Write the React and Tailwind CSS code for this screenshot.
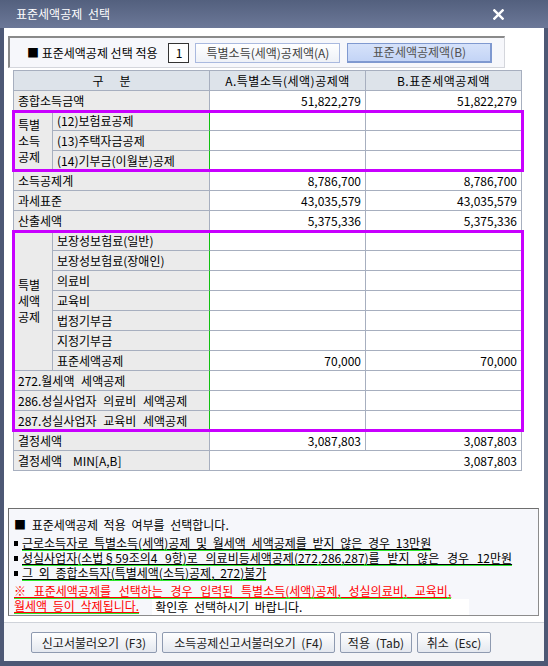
import React from "react";

const GRID = "border-[#a7afbf]";
const LBL = `bg-[#ebebeb] border-r border-b ${GRID} pl-[4px] flex items-center whitespace-nowrap`;
const VAL = `bg-white border-r border-b ${GRID} pr-[4px] flex items-center justify-end`;
const LBL_G = `bg-[#ebebeb] border-r border-r-[#10c010] border-b border-b-[#a7afbf] pl-[4px] flex items-center whitespace-nowrap`;

function SimpleRow({ label, a, b }) {
  return (
    <div className="grid grid-cols-[196px_156px_156px] h-[20px]">
      <div className={LBL}>{label}</div>
      <div className={VAL}>{a}</div>
      <div className={VAL}>{b}</div>
    </div>
  );
}

function Magenta() {
  return (
    <div className="pointer-events-none absolute -left-[2px] -right-[2px] -top-[1px] -bottom-[1px] border-[3px] border-[#c800ff]" />
  );
}

function Bullet() {
  return <span className="inline-block w-[4px] h-[5px] bg-black mr-[4px] mb-[2px] align-middle" />;
}

function Btn({ children, w }) {
  return (
    <button
      className={`h-[21px] ${w} rounded-[2px] border border-[#8e9ab0] bg-gradient-to-b from-[#ffffff] to-[#e4e8ef] text-[12px] text-[#202020] [word-spacing:3px] flex items-center justify-center`}
    >
      {children}
    </button>
  );
}

export default function App() {
  const group1 = ["(12)보험료공제", "(13)주택자금공제", "(14)기부금(이월분)공제"];
  const group2 = [
    ["보장성보험료(일반)", "", ""],
    ["보장성보험료(장애인)", "", ""],
    ["의료비", "", ""],
    ["교육비", "", ""],
    ["법정기부금", "", ""],
    ["지정기부금", "", ""],
    ["표준세액공제", "70,000", "70,000"],
  ];
  const group2b = ["272.월세액 세액공제", "286.성실사업자 의료비 세액공제", "287.성실사업자 교육비 세액공제"];

  return (
    <div className="w-[548px] h-[666px] bg-[#4d5875] flex flex-col font-['Noto_Sans_CJK_KR','Noto_Sans',sans-serif] text-[12px] text-black overflow-hidden">
      {/* title bar */}
      <div className="h-[28px] shrink-0 flex items-center justify-between pl-[16px] pr-[44px] bg-gradient-to-b from-[#53607e] to-[#6c7898]">
        <span className="text-white text-[12px] [word-spacing:3px] leading-none">표준세액공제 선택</span>
        <svg width="11" height="11" viewBox="0 0 12 12">
          <path d="M1.5 1.5 L10.5 10.5 M10.5 1.5 L1.5 10.5" stroke="white" strokeWidth="2.6" strokeLinecap="square" />
        </svg>
      </div>

      <div className="flex-1 flex flex-col px-[4px] pb-[5px]">
        <div className="flex-1 bg-white flex flex-col">
          {/* top panel */}
          <div className="mt-[8px] ml-[4px] w-[497px] h-[32px] bg-[#f6f7fb] border-t-2 border-l-2 border-t-[#8a8a8a] border-l-[#8a8a8a] border-r border-b border-r-[#d4d6dc] border-b-[#d4d6dc] flex items-center">
            <span className="ml-[17px] text-[12px] whitespace-nowrap">■ 표준세액공제 선택 적용</span>
            <div className="ml-[11px] w-[21px] h-[20px] bg-white border border-[#333] flex items-center justify-center text-[12px]">1</div>
            <div className="ml-[6px] w-[145px] h-[20px] border border-[#a9b9df] bg-gradient-to-b from-[#ffffff] to-[#eef1f7] flex items-center justify-center text-[12px] text-[#404040]">
              특별소득(세액)공제액(A)
            </div>
            <div className="ml-[7px] w-[145px] h-[20px] border border-[#7f99d0] border-b-2 border-r-2 bg-gradient-to-b from-[#d6e2fa] to-[#c3d4f6] flex items-center justify-center text-[12px] text-[#505050]">
              표준세액공제액(B)
            </div>
          </div>

          {/* table */}
          <div className={`mt-[2px] ml-[9px] w-[509px] border-l border-t ${GRID} flex flex-col`}>
            <div className="grid grid-cols-[196px_156px_156px] h-[20px] bg-[#dde3ea]">
              <div className={`border-r border-b ${GRID} flex items-center justify-center whitespace-pre`}>구      분</div>
              <div className={`border-r border-b ${GRID} flex items-center justify-center tracking-[0.5px]`}>A.특별소득(세액)공제액</div>
              <div className={`border-r border-b ${GRID} flex items-center justify-center tracking-[0.5px]`}>B.표준세액공제액</div>
            </div>
            <SimpleRow label="종합소득금액" a="51,822,279" b="51,822,279" />

            <div className="relative">
              <div className="grid grid-cols-[39px_157px_156px_156px] auto-rows-[20px]">
                <div className={`${LBL} row-span-3 leading-[16px]`}>
                  <span>특별<br />소득<br />공제</span>
                </div>
                {group1.map((g) => (
                  <React.Fragment key={g}>
                    <div className={LBL_G}>{g}</div>
                    <div className={VAL}></div>
                    <div className={VAL}></div>
                  </React.Fragment>
                ))}
              </div>
              <Magenta />
            </div>

            <SimpleRow label="소득공제계" a="8,786,700" b="8,786,700" />
            <SimpleRow label="과세표준" a="43,035,579" b="43,035,579" />
            <SimpleRow label="산출세액" a="5,375,336" b="5,375,336" />

            <div className="relative">
              <div className="grid grid-cols-[39px_157px_156px_156px] auto-rows-[20px]">
                <div className={`${LBL} row-span-7 leading-[16px]`}>
                  <span>특별<br />세액<br />공제</span>
                </div>
                {group2.map(([g, a, b]) => (
                  <React.Fragment key={g}>
                    <div className={LBL_G}>{g}</div>
                    <div className={VAL}>{a}</div>
                    <div className={VAL}>{b}</div>
                  </React.Fragment>
                ))}
                {group2b.map((g) => (
                  <React.Fragment key={g}>
                    <div className={`${LBL_G} col-span-2 [word-spacing:4px]`}>{g}</div>
                    <div className={VAL}></div>
                    <div className={VAL}></div>
                  </React.Fragment>
                ))}
              </div>
              <Magenta />
            </div>

            <SimpleRow label="결정세액" a="3,087,803" b="3,087,803" />
            <div className="grid grid-cols-[196px_312px] h-[20px]">
              <div className={`${LBL} whitespace-pre`}>결정세액    MIN[A,B]</div>
              <div className={VAL}>3,087,803</div>
            </div>
          </div>

          {/* info panel */}
          <div className="mt-[37px] ml-[4px] w-[531px] h-[108px] bg-[#f6f7fb] border border-[#6e6e6e] border-r-[#8c8c8c] border-b-[#8c8c8c] pl-[5px] pt-[7px] text-[12px] [word-spacing:3px] whitespace-nowrap">
            <div className="h-[17px] leading-[17px]">■ 표준세액공제 적용 여부를 선택합니다.</div>
            <div className="mt-[3px] h-[15px] leading-[13px]">
              <Bullet />
              <span className="inline-block leading-[13px] border-b-2 border-[#2ee82e] underline underline-offset-1">근로소득자로 특별소득(세액)공제 및 월세액 세액공제를 받지 않은 경우 13만원</span>
            </div>
            <div className="h-[15px] leading-[13px]">
              <Bullet />
              <span className="inline-block leading-[13px] border-b-2 border-[#2ee82e] underline underline-offset-1 [word-spacing:5px]">성실사업자(소법§59조의4 9항)로 의료비등세액공제(272,286,287)를 받지 않은 경우 12만원</span>
            </div>
            <div className="h-[15px] leading-[13px]">
              <Bullet />
              <span className="inline-block leading-[13px] border-b-2 border-[#2ee82e] underline underline-offset-1">그 외 종합소득자(특별세액(소득)공제, 272)불가</span>
            </div>
            <div className="mt-[3px] h-[15px] leading-[13px] text-[#ff0000]">
              <span className="inline-block leading-[13px] border-b-2 border-[#2ee82e] underline underline-offset-1 [word-spacing:5px]">※ 표준세액공제를 선택하는 경우 입력된 특별소득(세액)공제, 성실의료비, 교육비,</span>
            </div>
            <div className="h-[16px] leading-[14px] flex items-start">
              <span className="inline-block leading-[13px] text-[#ff0000] border-b-2 border-[#2ee82e] underline underline-offset-1">월세액 등이 삭제됩니다.</span>
              <span className="ml-[13px] inline-block w-[317px] h-[16px] bg-white pl-[3px] leading-[16px]">확인후 선택하시기 바랍니다.</span>
            </div>
          </div>

          {/* button bar */}
          <div className="mt-[6px] flex-1 border-t border-[#cfd3da] bg-[#f3f4f7] flex items-start pt-[9px] pl-[27px] gap-[5px]">
            <Btn w="w-[126px]">신고서불러오기 (F3)</Btn>
            <Btn w="w-[173px]">소득공제신고서불러오기 (F4)</Btn>
            <Btn w="w-[72px]">적용 (Tab)</Btn>
            <Btn w="w-[74px]">취소 (Esc)</Btn>
          </div>
        </div>
      </div>
    </div>
  );
}
